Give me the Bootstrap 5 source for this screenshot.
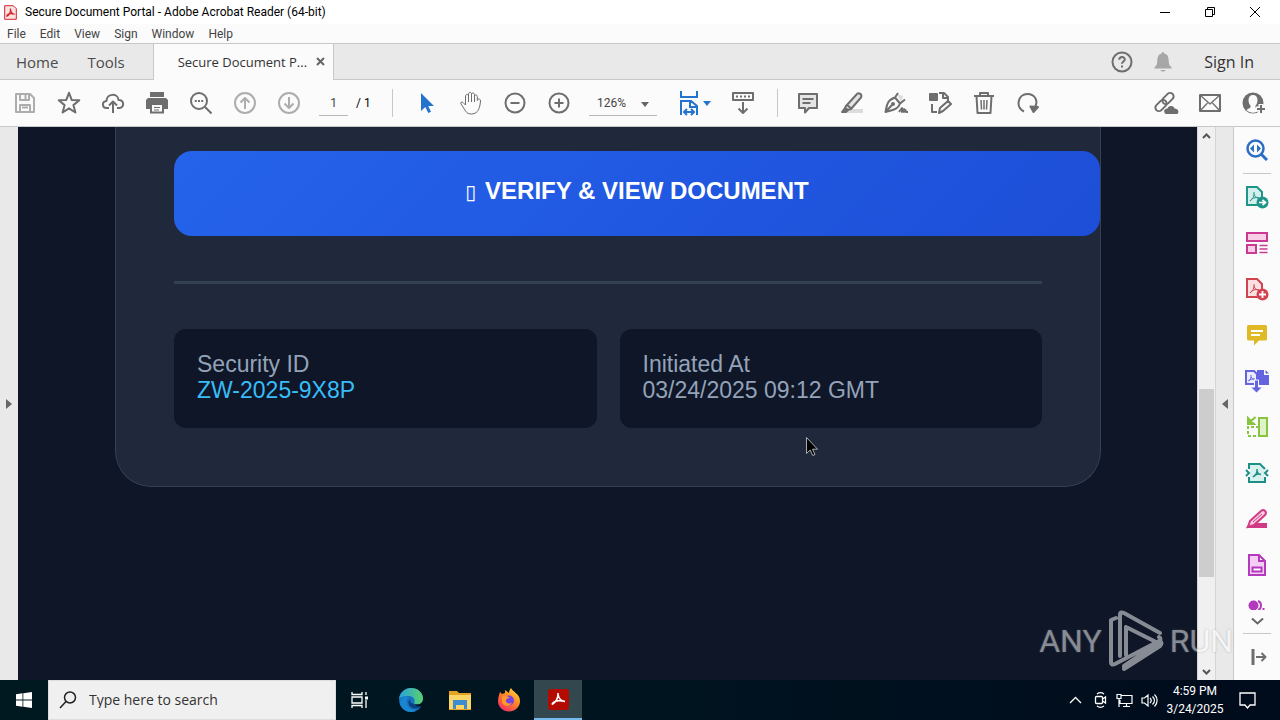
<!DOCTYPE html>
<html lang="en">
<head>
<meta charset="utf-8">
<meta name="viewport" content="width=device-width, initial-scale=1">
<title>Secure Document Portal - Adobe Acrobat Reader (64-bit)</title>
<link href="https://cdn.jsdelivr.net/npm/bootstrap@5.3.0/dist/css/bootstrap.min.css" rel="stylesheet">
<style>
  body { font-family: "Open Sans", "Noto Sans", sans-serif; font-size: 12px; line-height: 16px; color: #000; background: #fff; }
  button, input { font-family: inherit; }
  svg { display: block; flex: none; }
  .plain { border: 0; background: none; padding: 0; color: inherit; display: flex; align-items: center; justify-content: center; }
  .titlebar, .menubar, .toolbar, .clock { font-family: Roboto, sans-serif; font-size: 12px; }
  .titlebar { height: 24px; padding-right: 3px; }
  .win-btn { width: 45px; height: 20px; }
  .menubar { height: 20px; background: #fbfbfb; border-bottom: 1px solid #c8c8c8; gap: 14px; padding-left: 7px; }
  .menubar a { color: #444; text-decoration: none; }
  .tabbar { height: 36px; background: #e9e9e9; border-bottom: 1px solid #c8c8c8; font-size: 15px; color: #4b4b4b; padding-right: 26px; }
  .tabbar > a { color: #4b4b4b; text-decoration: none; white-space: nowrap; }
  .tabbar .nav-tools { margin: 0 28px 0 29px; }
  .tabbar .signin { font-size: 16px; color: #333; }
  .bell { margin: 0 32px 0 21px; }
  .doc-tab { width: 181px; height: 36px; background: #fbfbfb; border: solid #c8c8c8; border-width: 0 1px; font-size: 13px; color: #333; padding: 0 8px 0 24px; }
  .toolbar { height: 47px; background: #fbfbfb; border-bottom: 1px solid #c8c8c8; padding: 0 4px 0 3px; }
  .tool { width: 44px; height: 44px; flex: none; }
  .ico { fill: none; stroke: #6e6e6e; stroke-width: 2; stroke-linejoin: round; }
  .dim { opacity: .55; }
  .rule { width: 1px; height: 28px; background: #c8c8c8; flex: none; }
  .page-count { width: 36px; }
  .fit { margin: 0 10px 0 22px; }
  .page-box { width: 29px; height: 26px; border: 0; border-bottom: 1px solid #b8b8b8; background: none; text-align: center; padding: 0; color: #444; }
  .zoom-box { width: 68px; height: 26px; border: 0; border-bottom: 1px solid #b8b8b8; border-radius: 0; background: none; appearance: none; padding: 0 8px; color: #444; }
  .caret { right: 8px; top: 12px; pointer-events: none; }
  .strip { width: 18px; background: #e9e9e9; flex: none; }
  .doc { background: #0e1628; font-family: "Liberation Sans", Arial, sans-serif; font-size: 23px; line-height: 26px; }
  .portal { margin: 0 96px 0 97px; padding: 24px 58px 58px; background: #1f293b; border: 1px solid #334155; border-top: 0; border-radius: 0 0 36px 36px; }
  .verify { width: calc(100% + 58px); height: 85px; border: 0; border-radius: 18px; background: linear-gradient(135deg, #2563eb, #1d4ed8); color: #fff; font-size: 24px; font-weight: 700; padding: 0 0 4px; }
  .tofu { font-family: "DejaVu Sans", sans-serif; font-weight: 400; font-size: 20px; margin-right: 2px; }
  .divider { height: 3px; background: #334155; margin: 45px 0 45px; }
  .info { gap: 23px; }
  .info > div { background: #0e1628; border-radius: 12px; padding: 22px 23px 25px; color: #94a3b8; }
  .info .code { color: #38bdf8; }
  .pointer { left: 806px; top: 310px; }
  .scroll { width: 19px; background: #f0f0f0; border: solid #d5d5d5; border-width: 0 1px; flex: none; }
  .scroll button { height: 17px; }
  .before { flex: 245 1 0; } .thumb { flex: 188 1 0; background: #cdcdcd; margin: 0 1px; } .after { flex: 86 1 0; }
  .strip-r { border-right: 1px solid #c8c8c8; }
  .pane { width: 46px; background: #fbfbfb; flex: none; }
  .pane button { height: 46px; }
  .pane .part { height: 22px; overflow: hidden; align-items: flex-start; }
  .pane .more { height: 22px; }
  .pane .line { height: 1px; background: #c8c8c8; margin: 0 9px; }
  .watermark { right: 47px; bottom: 8px; color: #fff; opacity: .5; font-family: Roboto, sans-serif; font-weight: 400; font-size: 32px; line-height: 62px; gap: 6px; pointer-events: none; text-shadow: 0 0 2px #777; }
  .taskbar { height: 40px; background: linear-gradient(90deg, #00181f, #001420 50%, #000b1b); color: #fff; }
  .app { width: 48px; height: 40px; }
  .app.on { background: #33474f; border-bottom: 2px solid #76b9ed; }
  .apps { gap: 1px; margin-left: 2px; }
  .search { width: 288px; height: 40px; background: #f0f0f0; border: 1px solid #ddd; padding: 0 10px; color: #333; }
  .search input { border: 0; background: none; font-size: 14px; min-width: 0; padding: 0; outline: 0; }
  .search input::placeholder { color: #333; opacity: 1; }
  .clock { width: 66px; line-height: 18px; text-align: center; }
  .notify { width: 38px; height: 40px; margin-right: 14px; }
</style>
</head>
<body class="vh-100 d-flex flex-column overflow-hidden">

<header>
  <div class="titlebar d-flex align-items-center">
    <svg class="ms-1" width="13" height="15" viewBox="0 0 13 15"><path d="M.7.7h8.600l3 3v10.600H.7z" fill="#fbe3e1" stroke="#d2232a"/><path d="M2.500 11.500c2.600-1 4.500-4.500 4-8M2.500 11.500c1-3 4-3.500 8-2.300M6.300 4c.4 2.800 1.800 4.800 4.200 5.300" fill="none" stroke="#d2232a" stroke-width="1.300"/></svg>
    <span class="ms-2 text-nowrap">Secure Document Portal - Adobe Acrobat Reader (64-bit)</span>
    <div class="d-flex ms-auto">
      <button class="plain win-btn" aria-label="Minimize"><svg width="12" height="12"><path d="M1 6.500h10" stroke="#000"/></svg></button>
      <button class="plain win-btn" aria-label="Restore"><svg width="12" height="12" fill="none" stroke="#000"><path d="M1.500 3.500h7v7h-7zM3.500 3.500v-2h7v7h-2"/></svg></button>
      <button class="plain win-btn" aria-label="Close"><svg width="12" height="12" stroke="#000"><path d="M1 1l10 10M11 1L1 11"/></svg></button>
    </div>
  </div>
  <nav class="menubar d-flex align-items-center" aria-label="Menu">
    <a href="#">File</a><a href="#">Edit</a><a href="#">View</a><a href="#">Sign</a><a href="#">Window</a><a href="#">Help</a>
  </nav>
  <div class="tabbar d-flex align-items-center">
    <a href="#" class="ms-3">Home</a><a href="#" class="nav-tools">Tools</a>
    <div class="doc-tab d-flex align-items-center me-auto"><span class="text-nowrap">Secure Document P...</span>
      <button class="plain ms-auto" aria-label="Close tab"><svg width="9" height="9" stroke="#666" stroke-width="2"><path d="M1 1l7 7M8 1L1 8"/></svg></button></div>
    <button class="plain" aria-label="Help"><svg class="ico" width="22" height="22" viewBox="0 0 22 22"><circle cx="11" cy="11" r="9.500"/><path d="M8.200 8.700c.2-3.600 5.800-3.300 5.600-.2-.1 2-2.800 2-2.800 4.300M11 14.500v2"/></svg></button>
    <button class="plain bell" aria-label="Notifications"><svg width="18" height="20" viewBox="0 0 18 20" fill="#a6a6a6"><path d="M9 0c1 0 1.300.8 1.300 1.600C14 2.500 14.600 5.500 14.700 9c.1 3.500 1 5 2.800 6v1.500H.5V15c1.800-1 2.700-2.500 2.800-6 .1-3.500.7-6.500 4.400-7.400C7.700.8 8 0 9 0zM6.500 18h5c-.5 2-4.500 2-5 0z"/></svg></button>
    <a href="#" class="signin">Sign In</a>
  </div>
  <div class="toolbar d-flex align-items-center">
    <button class="plain tool dim" aria-label="Save"><svg class="ico" width="22" height="22" viewBox="0 0 22 22"><path d="M2 2h14l4 4v14H2zM6 2v6h9V2M11.500 3v4M6 20v-7h10v7M8 15.500h6"/></svg></button>
    <button class="plain tool" aria-label="Star"><svg class="ico" width="24" height="24" viewBox="0 0 24 24"><path d="M12 1.800l2.700 7.100 7.600.4-5.900 4.800 2 7.400-6.400-4.200-6.400 4.200 2-7.400-5.900-4.800 7.600-.4z"/></svg></button>
    <button class="plain tool" aria-label="Upload"><svg class="ico" width="24" height="24" viewBox="0 0 24 24"><path d="M8 17H5.500C1 17 .5 10.500 5.500 10 5.500 2 17 2 17.500 9c6-.5 6 8 1 8H16M12 22V10.500M8 14.500l4-4 4 4"/></svg></button>
    <button class="plain tool" aria-label="Print"><svg width="24" height="22" viewBox="0 0 24 22" fill="#6e6e6e"><path d="M5 0h14v5H5zM3 6h18l2 2v9h-4v-4H5v4H1V8z"/><path d="M6 12h12v8.500H6z" fill="#fbfbfb" stroke="#6e6e6e" stroke-width="2"/><path d="M9 15h6v1H9zM9 17.500h5v1H9z"/></svg></button>
    <button class="plain tool" aria-label="Find"><svg class="ico" width="24" height="24" viewBox="0 0 24 24"><circle cx="10" cy="10" r="8"/><path d="M16 16l6.500 6.500M5.800 10h2M9 10h2M12.200 10h2"/></svg></button>
    <button class="plain tool dim" aria-label="Previous page"><svg class="ico" width="22" height="22" viewBox="0 0 22 22"><circle cx="11" cy="11" r="10"/><path d="M11 17V6M6.500 10.500L11 6l4.500 4.500"/></svg></button>
    <button class="plain tool dim" aria-label="Next page"><svg class="ico" width="22" height="22" viewBox="0 0 22 22"><circle cx="11" cy="11" r="10"/><path d="M11 5v11M6.500 11.500L11 16l4.500-4.500"/></svg></button>
    <input class="page-box ms-2" value="1" aria-label="Page number"><span class="page-count ms-2">/ 1</span>
    <span class="rule me-2"></span>
    <button class="plain tool ms-1" aria-label="Select"><svg width="16" height="22" viewBox="0 0 16 22"><path d="M2 1v18l4.300-4 3 6 2.700-1.300L9.200 14H15z" fill="#2473cd"/></svg></button>
    <button class="plain tool" aria-label="Pan"><svg class="ico" width="24" height="24" viewBox="0 0 24 24"><path d="M6.500 14V5c0-2 3-2 3 0v6V3c0-2.200 3-2.200 3 0v8-7.500c0-2 3-2 3 0V11 5.500c0-2 2.800-2 2.800 0v4c.3-2 3.500-2 3.200.5-.5 5-1.500 13-9 13-6 0-6-4-10.500-10-1-1.700 1-2.500 2-1.500z" stroke-width="1"/></svg></button>
    <button class="plain tool" aria-label="Zoom out"><svg class="ico" width="22" height="22" viewBox="0 0 22 22"><circle cx="11" cy="11" r="9.500"/><path d="M6.500 11h9"/></svg></button>
    <button class="plain tool" aria-label="Zoom in"><svg class="ico" width="22" height="22" viewBox="0 0 22 22"><circle cx="11" cy="11" r="9.500"/><path d="M6.500 11h9M11 6.500v9"/></svg></button>
    <div class="position-relative ms-2"><select class="zoom-box" aria-label="Zoom"><option>126%</option></select><svg class="caret position-absolute" width="8" height="5"><path d="M0 0h8L4 5z" fill="#666"/></svg></div>
    <button class="plain fit gap-1" aria-label="Fit width"><svg width="20" height="26" viewBox="0 0 20 26" fill="none" stroke="#2473cd" stroke-width="2"><path d="M2 1v6h16V1M2 25V11h10l6 5v9M11 11v6h7M5 22h10M8 19l-3 3 3 3M12 19l3 3-3 3"/></svg><svg width="8" height="5"><path d="M0 0h8L4 5z" fill="#2473cd"/></svg></button>
    <button class="plain tool me-2" aria-label="Scroll mode"><svg class="ico" width="24" height="24" viewBox="0 0 24 24"><path d="M2 2h20v7H2zM12 11v11M7.500 17.500L12 22l4.500-4.500"/><path d="M5 5.500h14" stroke-dasharray="2 2"/></svg></button>
    <span class="rule me-2 ms-1"></span>
    <button class="plain tool" aria-label="Comment"><svg class="ico" width="22" height="22" viewBox="0 0 22 22"><path d="M2 2h18v14h-8l-4 4.500V16H2z" fill="#e4e4e4"/><path d="M5.500 7h11M5.500 11h8"/></svg></button>
    <button class="plain tool" aria-label="Highlight"><svg class="ico" width="24" height="24" viewBox="0 0 24 24"><path d="M8 18h15v4H5z" fill="#dcdcdc" style="stroke:none"/><path d="M6 15L17 3c2-2 5.500.5 4 3.500L11 18l-4 1-2-2zM7 14l5 4" fill="#e4e4e4"/><path d="M5 17l3 2-2 2H2z" fill="#6e6e6e"/></svg></button>
    <button class="plain tool" aria-label="Sign"><svg class="ico" width="24" height="24" viewBox="0 0 24 24"><path d="M13 3l6 2-2 6z" fill="#dcdcdc" style="stroke:none"/><path d="M1.500 21C3 15 2 10 11 6.500l5 6C14 19 8 19 1.500 21zM1.500 21l6.500-7M11 6.500L14 2M16 12.500l5-4M15 21l3-4v4l2-3v3l1.500-2 .5 2h2"/><circle cx="9" cy="13" r="1"/></svg></button>
    <button class="plain tool" aria-label="Edit"><svg class="ico" width="24" height="24" viewBox="0 0 24 24"><path d="M11 2h5l4 4v4M15 2v5h5M4 13v8h5"/><path d="M2 3h7v6H2z" fill="#6e6e6e"/><path d="M11 22l1-5 8-7 3 3-8 7z"/></svg></button>
    <button class="plain tool" aria-label="Delete"><svg class="ico" width="22" height="24" viewBox="0 0 22 24"><path d="M1 5h20M7 5V2h8v3M3.500 5l1 17h13l1-17"/><path d="M8 9l.5 9.500M11 9v9.500M14 9l-.5 9.500" style="stroke-width:1.500"/></svg></button>
    <button class="plain tool" aria-label="Rotate"><svg class="ico" width="22" height="22" viewBox="0 0 22 22"><path d="M7 19.500C-2 15 1 2 10.500 2 18 2 21.500 9 18 15"/><path d="M13.500 14.500l7.500.5-4.500 5z" fill="#6e6e6e"/></svg></button>
    <button class="plain tool ms-auto" aria-label="Share link"><svg class="ico" width="26" height="24" viewBox="0 0 26 24"><rect x="-6.500" y="-3.500" width="13" height="7" rx="3.500" transform="translate(8 14.500) rotate(-45)"/><rect x="-6.500" y="-3.500" width="13" height="7" rx="3.500" transform="translate(15 7.500) rotate(-45)"/><path d="M13 22c-2-2 0-4 2-3.500 1-3.500 5-3.500 6 0 3-.5 4 2 3 3.500z" fill="#6e6e6e"/></svg></button>
    <button class="plain tool" aria-label="Mail"><svg class="ico" width="22" height="18" viewBox="0 0 22 18"><path d="M1 1h20v16H1z"/><path d="M1 1l10 9L21 1M1 17l7.500-8M21 17l-7.500-8" style="stroke-width:1.300"/></svg></button>
    <button class="plain tool" aria-label="Profile"><svg width="24" height="24" viewBox="0 0 24 24"><circle cx="11" cy="12" r="10.500" fill="#6e6e6e"/><path d="M11 4c3 0 4.500 2 4.500 5s-1 4.500-2 5.500v2c1.500 1 3 1.200 4 2.500-3.500 3.500-9.500 3.500-13 0 1-1.300 2.500-1.500 4-2.500v-2c-1-1-2-2.500-2-5.500s1.500-5 4.500-5z" fill="#fbfbfb"/><path d="M19 13v10M14 18h10" stroke="#fbfbfb" stroke-width="5"/><path d="M19 14v8M15 18h8" stroke="#6e6e6e" stroke-width="2"/></svg></button>
  </div>
</header>

<main class="d-flex flex-grow-1 position-relative overflow-hidden">
  <button class="plain strip" aria-label="Show navigation pane"><svg width="6" height="10"><path d="M0 0v10l6-5z" fill="#666"/></svg></button>
  <section class="doc flex-grow-1 overflow-hidden">
    <div class="portal">
      <button class="verify d-block"><span class="tofu">▯</span> VERIFY &amp; VIEW DOCUMENT</button>
      <div class="divider"></div>
      <div class="info d-flex">
        <div class="w-50">Security ID<br><span class="code">ZW-2025-9X8P</span></div>
        <div class="w-50">Initiated At<br>03/24/2025 09:12 GMT</div>
      </div>
    </div>
  </section>
  <div class="scroll d-flex flex-column">
    <button class="plain" aria-label="Scroll up"><svg width="9" height="6" fill="none" stroke="#555" stroke-width="2"><path d="M1 5l3.500-3.500L8 5"/></svg></button>
    <span class="before"></span><span class="thumb"></span><span class="after"></span>
    <button class="plain" aria-label="Scroll down"><svg width="9" height="6" fill="none" stroke="#555" stroke-width="2"><path d="M1 1l3.500 3.500L8 1"/></svg></button>
  </div>
  <button class="plain strip strip-r" aria-label="Hide tools pane"><svg width="6" height="10"><path d="M6 0v10L0 5z" fill="#666"/></svg></button>
  <aside class="pane d-flex flex-column">
    <button class="plain" aria-label="Search tools"><svg width="22" height="22" viewBox="0 0 22 22" fill="none" stroke="#2b6fc4" stroke-width="2.500"><circle cx="9.500" cy="9.500" r="8"/><path d="M15.500 15.500L21 21" stroke-width="3"/><path d="M8 5.500v8l-4-4zM11 5.500v8l4-4z" fill="#2b6fc4" stroke="none"/></svg></button>
    <div class="line"></div>
    <button class="plain" aria-label="Export PDF"><svg width="24" height="24" viewBox="0 0 24 24"><path d="M2 2h10l5 5v13H2z" fill="#d3efec" stroke="#1f9488" stroke-width="2"/><path d="M5 16c3-2 4.500-5 4-9M5 16c2-3 5-4 9-3M9 9c.5 2 2 4 5 4" fill="none" stroke="#1f9488"/><circle cx="17.500" cy="17.500" r="6" fill="#1f9488"/><path d="M14 17.500h6M17.500 15l3 2.500-3 2.500" fill="none" stroke="#fff" stroke-width="1.700"/></svg></button>
    <button class="plain" aria-label="Organize pages"><svg width="24" height="24" viewBox="0 0 24 24" fill="#f8cde6" stroke="#cb3a92" stroke-width="2"><path d="M2 2h20v8H2zM2 14h9v8H2z"/><path d="M14.500 14.500h8M14.500 18h8M14.500 21.500h8" stroke-width="1.300"/></svg></button>
    <button class="plain" aria-label="Create PDF"><svg width="24" height="24" viewBox="0 0 24 24"><path d="M2 2h10l5 5v13H2z" fill="#fbe0e2" stroke="#d24350" stroke-width="2"/><path d="M5 16c3-2 4.500-5 4-9M5 16c2-3 5-4 9-3M9 9c.5 2 2 4 5 4" fill="none" stroke="#d24350"/><circle cx="17.500" cy="17.500" r="6" fill="#d24350"/><path d="M14 17.500h7M17.500 14v7" stroke="#fff" stroke-width="1.800"/></svg></button>
    <button class="plain" aria-label="Comment tool"><svg width="22" height="22" viewBox="0 0 22 22"><path d="M2.500 1h17a1.500 1.500 0 011.500 1.500V15a1.500 1.500 0 01-1.500 1.500H13L8 21.500v-5H2.500A1.500 1.500 0 011 15V2.500A1.500 1.500 0 012.500 1z" fill="#e0b927"/><path d="M5 7h12M5 11h9" stroke="#fff" stroke-width="1.800"/></svg></button>
    <button class="plain" aria-label="Combine files"><svg width="26" height="24" viewBox="0 0 26 24"><path d="M13 1h7v5h5v10h-12z" fill="#6464e0"/><path d="M21.500 1v3.500H25z" fill="#6464e0"/><path d="M2 2h8l3 3v10H2z" fill="#ececff" stroke="#6464e0" stroke-width="2"/><path d="M4.500 12c2-1.500 3-4 2.500-6M4.500 12c2-2 4-2 6-2M7 8c1 1.500 2 2 3.500 2" fill="none" stroke="#6464e0"/><path d="M10.500 11h4v7h4L12.500 24l-6-6h4z" fill="#6464e0" stroke="#fbfbfb"/></svg></button>
    <button class="plain" aria-label="Compress pages"><svg width="22" height="22" viewBox="0 0 22 22" fill="none" stroke="#86c53d" stroke-width="2"><path d="M13 2h8v18h-8z" fill="#e0f2c9"/><path d="M13 11H2v9h11" stroke-dasharray="3 2"/><path d="M9.500 1L3 7M2 2v6h6z" fill="#86c53d"/></svg></button>
    <button class="plain" aria-label="Optimize PDF"><svg width="24" height="22" viewBox="0 0 24 22" fill="none" stroke="#1f8f86" stroke-width="2"><path d="M5 3h10l4 4v12H5z" fill="#d8f0ee" stroke="none"/><path d="M4 7V2h11l5 5M4 15v5h16v-5M1 8l3 3-3 3M23 8l-3 3 3 3"/><path d="M8 15c2.500-1.500 4.500-4.500 4-8M8 15c2-2.500 5-3.500 8-2.500M12 9c.5 2 2 3.500 4 3.500" stroke-width="1.500"/></svg></button>
    <button class="plain" aria-label="Redact"><svg width="24" height="22" viewBox="0 0 24 22"><path d="M10 15h12v5H1l3-5z" fill="#d23a86"/><path d="M5 13L16 3c3-2.500 6.500 1 4 4L9 17l-6 2z" fill="#f8cde0" stroke="#d23a86" stroke-width="2"/><path d="M8 14l9-8" stroke="#d23a86"/></svg></button>
    <button class="plain" aria-label="Prepare form"><svg width="18" height="22" viewBox="0 0 18 22" fill="#f4cdf5" stroke="#b339bd" stroke-width="2"><path d="M1 1h10l6 6v14H1zM11 1v6h6"/><path d="M4.500 13.500h9v4h-9z" fill="#fff"/></svg></button>
    <button class="plain part pt-2" aria-label="Stamp"><svg class="mt-1" width="18" height="12" viewBox="0 0 18 12"><circle cx="5.500" cy="5.500" r="5" fill="#b339bd"/><path d="M10 1c4 1 4 8 0 9" fill="none" stroke="#b339bd" stroke-width="2"/><path d="M14.500 8h2v2h-2z" fill="#b339bd"/></svg></button>
    <button class="plain more" aria-label="More tools"><svg width="13" height="9" fill="none" stroke="#666" stroke-width="2"><path d="M1 1.500l5.500 5L12 1.500"/></svg></button>
    <div class="line mt-auto"></div>
    <button class="plain" aria-label="Collapse pane"><svg class="ico ms-1" width="16" height="16" viewBox="0 0 16 16"><path d="M2 0v16" style="stroke-width:3"/><path d="M5 8h9M10.500 4L14.500 8l-4 4"/></svg></button>
  </aside>
  <svg class="pointer position-absolute" width="12" height="19" viewBox="0 0 12 19"><path d="M.5.5v16l3.700-3.500 2.500 5.500 2.300-1-2.500-5.300h5z" fill="#000" stroke="#d0d0d0" stroke-width=".8"/></svg>
  <div class="watermark position-absolute d-flex align-items-center"><span>ANY</span>
    <svg width="56" height="62" viewBox="0 0 56 62" fill="none" stroke="#fff" stroke-width="4" stroke-linejoin="round" stroke-linecap="round"><path d="M8 8L3 10v42c0 3 2 3 4 2l44-23c2-1 2-3 0-4M12 46V5c0-3 2-3 4-2l36 20M18 17l32 16L16 56v3l36-23c2-2 2-4 0-5M18 17v28"/></svg><span>RUN</span></div>
</main>

<footer class="taskbar d-flex align-items-center">
  <button class="plain app" aria-label="Start"><svg width="16" height="16" viewBox="0 0 16 16" fill="#fff"><path d="M0 2.200l6.500-.9v6.200H0zM7.300 1.200L16 0v7.500H7.300zM0 8.400h6.500v6.300L0 13.800zM7.300 8.400H16V16l-8.700-1.200z"/></svg></button>
  <label class="search d-flex align-items-center gap-2"><svg class="me-1" width="18" height="18" viewBox="0 0 18 18" fill="none" stroke="#222" stroke-width="1.500"><circle cx="11" cy="6.500" r="5.500"/><path d="M7 10.500L1 17"/></svg><input class="flex-grow-1" placeholder="Type here to search" aria-label="Search"></label>
  <div class="apps d-flex">
    <button class="plain app" aria-label="Task view"><svg class="me-1" width="18" height="16" viewBox="0 0 18 16" fill="none" stroke="#fff" stroke-width="1.300"><path d="M1 0v2.500h10V0M1 5h10v6H1zM1 16v-2.500h10V16M15 0v3M15 8v8"/><path d="M14 4.500h3v3h-3z" fill="#fff" stroke="none"/></svg></button>
    <button class="plain app" aria-label="Edge"><svg width="24" height="24" viewBox="0 0 24 24"><defs><linearGradient id="eg" x1="0" y1="0" x2="1" y2="0"><stop offset="0" stop-color="#2a9fe0"/><stop offset="1" stop-color="#5ad16a"/></linearGradient></defs><path d="M0 11C1 4 6 0 12 0c7 0 12 5 12 10.500 0 4-4 6.500-8 5.500 0 2 3 3.500 6 2.500C20 22 16 24 12 24 5 24 0 18.500 0 11z" fill="#1573c4"/><path d="M0 11C1 4 6 0 12 0c7 0 12 5 12 10.500 0 5-5 7-9 5 1.500-2 .5-7-4.500-7.500C5 8 1 9 0 11z" fill="url(#eg)"/><path d="M9.500 9C5 13 8 22 17 22.500 12 26 3 23 1 16c-.5-4 3-8 8.500-7z" fill="#1a86d0"/><path d="M14.500 15.500c-3 0-4-2-3-4.500-4 2-2 9 4 9.500 3 .2 5-.7 6.500-2-3 .5-5.500-.5-7.500-3z" fill="#0c3f7d"/></svg></button>
    <button class="plain app" aria-label="File Explorer"><svg width="22" height="19" viewBox="0 0 22 19"><path d="M0 0h8l2 2h12v17H0z" fill="#e5a323"/><path d="M0 4h22v14H0z" fill="#fbd667"/><path d="M4 9h14v9h-3v-4H7v4H4z" fill="#3c8dd0"/></svg></button>
    <button class="plain app" aria-label="Firefox"><svg width="24" height="24" viewBox="0 0 24 24"><defs><linearGradient id="fx" x1=".9" y1="0" x2=".2" y2="1"><stop offset="0" stop-color="#ffe43c"/><stop offset=".45" stop-color="#ff8a24"/><stop offset="1" stop-color="#f02a66"/></linearGradient></defs><path d="M3 4l2 2 3-1V2l4 3c0-2 1-4 2-5 2 4 9 6 9 13 0 6-5 10.500-11 10.500S1 19 1 13c0-3 1-6 2-9z" fill="url(#fx)"/><circle cx="12" cy="12.500" r="5" fill="#7542e5"/><path d="M5 9c3-2 6-1 8 1-3-.5-3 1-4 2-1 3 4 5 6 2-1 5-9 5-10 0z" fill="#ff9a28"/></svg></button>
    <button class="plain app on" aria-label="Acrobat Reader"><svg width="21" height="21" viewBox="0 0 21 21"><rect width="21" height="21" rx="3" fill="#b30b00"/><path d="M4 15.500c4-2 6.500-7 6-11.500M4 15.500C5 12 11 10.500 17 12.500M10 5c.5 4 3 7 7 7.500" fill="none" stroke="#fff" stroke-width="1.600"/></svg></button>
  </div>
  <div class="d-flex align-items-center ms-auto">
    <button class="plain me-2 pe-1" aria-label="Hidden icons"><svg width="13" height="8" fill="none" stroke="#fff" stroke-width="1.300"><path d="M1 7l5.500-5.500L12 7"/></svg></button>
    <button class="plain me-2" aria-label="Meet now"><svg width="14" height="16" viewBox="0 0 14 16" fill="none" stroke="#fff" stroke-width="1.300"><rect x="1.500" y="4.500" width="7" height="7" rx="1"/><path d="M8.500 7l3-2v6l-3-2M3 2c2-1.500 5-1.500 7 0M3 14c2 1.500 5 1.500 7 0"/></svg></button>
    <button class="plain me-2" aria-label="Network"><svg width="17" height="15" viewBox="0 0 17 15" fill="none" stroke="#fff" stroke-width="1.200"><path d="M5 2.500h11v8H4V7M7 13.500h7M10.500 10.500v3M1 1.500h4v4H1zM3 5.500V14"/></svg></button>
    <button class="plain" aria-label="Volume"><svg width="17" height="15" viewBox="0 0 17 15" fill="none" stroke="#fff" stroke-width="1.200"><path d="M1 5h2.500L7 2v11L3.500 10H1zM9 5c1.500 1.500 1.500 3.500 0 5M11.500 3.500c2.500 2.500 2.500 5.500 0 8M13.500 1.500c3.500 3.500 3.500 8.500 0 12"/></svg></button>
    <div class="clock ms-1">4:59 PM<br>3/24/2025</div>
    <button class="plain notify" aria-label="Notification centre"><svg width="17" height="17" viewBox="0 0 17 17" fill="none" stroke="#fff" stroke-width="1.300"><path d="M1 1h15v12h-5l-2.500 3L6 13H1z"/></svg></button>
  </div>
</footer>
<script src="https://cdn.jsdelivr.net/npm/bootstrap@5.3.0/dist/js/bootstrap.bundle.min.js"></script>
</body>
</html>
